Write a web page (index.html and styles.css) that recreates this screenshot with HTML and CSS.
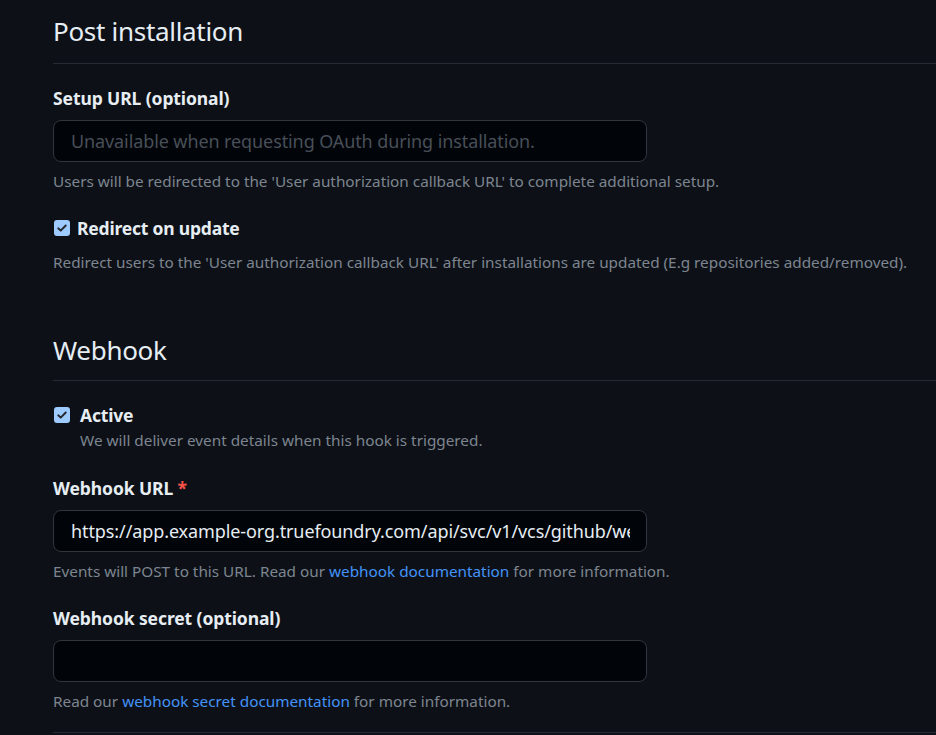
FILE: index.html
```html
<!DOCTYPE html>
<html lang="en">
<head>
<meta charset="utf-8">
<title>Post installation</title>
<link rel="stylesheet" href="styles.css">
</head>
<body>
<main class="page">
  <section class="section section-post">
    <h2 class="subhead">Post installation</h2>
    <div class="group group-first">
      <label class="label">Setup URL (optional)</label>
      <div class="input placeholder">Unavailable when requesting OAuth during installation.</div>
      <p class="note">Users will be redirected to the 'User authorization callback URL' to complete additional setup.</p>
    </div>
    <div class="check-group">
      <div class="check-row">
        <span class="checkbox"><svg viewBox="0 0 16 16" width="12" height="12"><path d="M3 8.4 L6.3 11.5 L13 4.6" fill="none" stroke="#24282e" stroke-width="2.6" stroke-linecap="round" stroke-linejoin="round"/></svg></span>
        <span class="check-label">Redirect on update</span>
      </div>
      <p class="note note-flush">Redirect users to the 'User authorization callback URL' after installations are updated (E.g repositories added/removed).</p>
    </div>
  </section>

  <section class="section section-webhook">
    <h2 class="subhead">Webhook</h2>
    <div class="check-group check-active">
      <div class="check-row">
        <span class="checkbox"><svg viewBox="0 0 16 16" width="12" height="12"><path d="M3 8.4 L6.3 11.5 L13 4.6" fill="none" stroke="#24282e" stroke-width="2.6" stroke-linecap="round" stroke-linejoin="round"/></svg></span>
        <span class="check-label">Active</span>
      </div>
      <p class="note note-indent">We will deliver event details when this hook is triggered.</p>
    </div>
    <div class="group group-after-check">
      <label class="label">Webhook URL <span class="required">*</span></label>
      <div class="input value"><span class="clip">https://app.example-org.truefoundry.com/api/svc/v1/vcs/github/webhook</span></div>
      <p class="note">Events will POST to this URL. Read our <a class="link" href="#">webhook documentation</a> for more information.</p>
    </div>
    <div class="group">
      <label class="label">Webhook secret (optional)</label>
      <div class="input value"></div>
      <p class="note">Read our <a class="link" href="#">webhook secret documentation</a> for more information.</p>
    </div>
    <div class="bottom-rule"></div>
  </section>
</main>
</body>
</html>
```

FILE: styles.css
```css
* { box-sizing: border-box; }
html, body {
  margin: 0;
  padding: 0;
  background: #0d1117;
}
body {
  font-family: "Noto Sans", "Open Sans", sans-serif;
  color: #e6edf3;
  overflow: hidden;
  height: 735px;
}
.page {
  padding-left: 53px;
  display: flex;
  flex-direction: column;
}
.subhead {
  margin: 0;
  font-size: 26px;
  font-weight: 400;
  line-height: 42px;
  padding-bottom: 11px;
  border-bottom: 1px solid #262b33;
  color: #e6edf3;
  letter-spacing: -0.3px;
}
.section-post .subhead { margin-top: 10px; }
.section-webhook .subhead { margin-top: 57px; padding-bottom: 9px; }

.group { display: flex; flex-direction: column; margin-top: 25px; }
.group-first { margin-top: 22px; }
.group-after-check { margin-top: 26px; }
.label {
  font-size: 17.5px;
  font-weight: 700;
  line-height: 24px;
  letter-spacing: -0.1px;
}
.required { color: #f85149; }
.input {
  margin-top: 10px;
  width: 594px;
  height: 42px;
  border: 1px solid #30363d;
  border-radius: 8px;
  background: #010409;
  padding: 0 17px;
  font-size: 18px;
  line-height: 40px;
  white-space: nowrap;
  overflow: hidden;
  letter-spacing: -0.1px;
}
.placeholder { color: #484f58; }
.value { color: #e6edf3; }
.clip { display: block; overflow: hidden; width: 559px; }
.note {
  margin: 9px 0 0;
  font-size: 15.3px;
  line-height: 20px;
  color: #7d8590;
}
.link { color: #4493f8; text-decoration: none; }

.check-group { margin-top: 25px; }
.check-row { display: flex; align-items: center; gap: 7px; height: 24px; }
.checkbox {
  width: 16px;
  height: 16px;
  border-radius: 3px;
  background: #9ecbff;
  display: flex;
  align-items: center;
  justify-content: center;
  margin-left: 1px;
}
.check-label {
  font-size: 17.5px;
  font-weight: 700;
  letter-spacing: -0.2px;
}
.note-flush { margin-top: 12px; }
.check-active { margin-top: 22px; }
.check-active .check-row { gap: 10px; }
.note-indent { margin-top: 3px; padding-left: 27px; }
.bottom-rule {
  margin-top: 21px;
  border-top: 1px solid #262b33;
}
```
